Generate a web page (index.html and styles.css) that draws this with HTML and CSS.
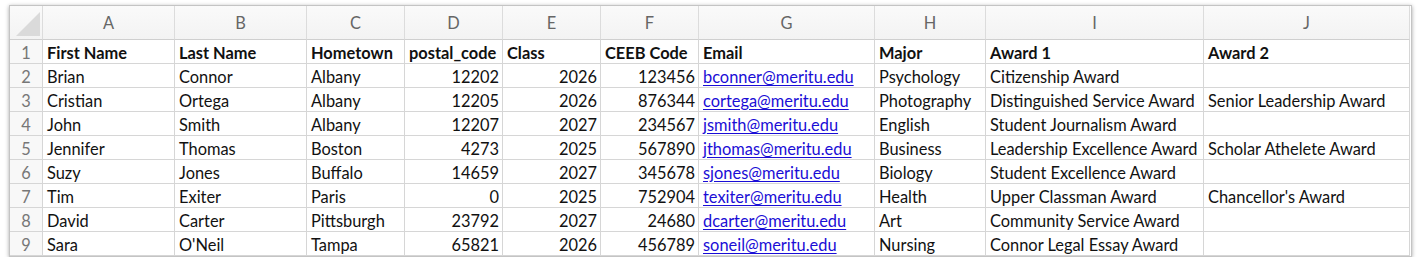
FILE: index.html
```html
<!DOCTYPE html>
<html>
<head>
<meta charset="utf-8">
<link rel="stylesheet" href="styles.css">
</head>
<body>
<div class="sheet">
  <div class="grid">
    <div class="hd corner"><span class="tri"></span></div>
    <div class="hd">A</div><div class="hd">B</div><div class="hd">C</div><div class="hd">D</div><div class="hd">E</div><div class="hd">F</div><div class="hd">G</div><div class="hd">H</div><div class="hd">I</div><div class="hd">J</div>

    <div class="rn">1</div>
    <div class="c b">First Name</div><div class="c b">Last Name</div><div class="c b">Hometown</div><div class="c b">postal_code</div><div class="c b">Class</div><div class="c b">CEEB Code</div><div class="c b">Email</div><div class="c b">Major</div><div class="c b">Award 1</div><div class="c b">Award 2</div>

    <div class="rn">2</div>
    <div class="c">Brian</div><div class="c">Connor</div><div class="c">Albany</div><div class="c n">12202</div><div class="c n">2026</div><div class="c n">123456</div><div class="c"><a href="#">bconner@meritu.edu</a></div><div class="c">Psychology</div><div class="c">Citizenship Award</div><div class="c"></div>

    <div class="rn">3</div>
    <div class="c">Cristian</div><div class="c">Ortega</div><div class="c">Albany</div><div class="c n">12205</div><div class="c n">2026</div><div class="c n">876344</div><div class="c"><a href="#">cortega@meritu.edu</a></div><div class="c">Photography</div><div class="c">Distinguished Service Award</div><div class="c">Senior Leadership Award</div>

    <div class="rn">4</div>
    <div class="c">John</div><div class="c">Smith</div><div class="c">Albany</div><div class="c n">12207</div><div class="c n">2027</div><div class="c n">234567</div><div class="c"><a href="#">jsmith@meritu.edu</a></div><div class="c">English</div><div class="c">Student Journalism Award</div><div class="c"></div>

    <div class="rn">5</div>
    <div class="c">Jennifer</div><div class="c">Thomas</div><div class="c">Boston</div><div class="c n">4273</div><div class="c n">2025</div><div class="c n">567890</div><div class="c"><a href="#">jthomas@meritu.edu</a></div><div class="c">Business</div><div class="c">Leadership Excellence Award</div><div class="c">Scholar Athelete Award</div>

    <div class="rn">6</div>
    <div class="c">Suzy</div><div class="c">Jones</div><div class="c">Buffalo</div><div class="c n">14659</div><div class="c n">2027</div><div class="c n">345678</div><div class="c"><a href="#">sjones@meritu.edu</a></div><div class="c">Biology</div><div class="c">Student Excellence Award</div><div class="c"></div>

    <div class="rn">7</div>
    <div class="c">Tim</div><div class="c">Exiter</div><div class="c">Paris</div><div class="c n">0</div><div class="c n">2025</div><div class="c n">752904</div><div class="c"><a href="#">texiter@meritu.edu</a></div><div class="c">Health</div><div class="c">Upper Classman Award</div><div class="c">Chancellor's Award</div>

    <div class="rn">8</div>
    <div class="c">David</div><div class="c">Carter</div><div class="c">Pittsburgh</div><div class="c n">23792</div><div class="c n">2027</div><div class="c n">24680</div><div class="c"><a href="#">dcarter@meritu.edu</a></div><div class="c">Art</div><div class="c">Community Service Award</div><div class="c"></div>

    <div class="rn">9</div>
    <div class="c">Sara</div><div class="c">O'Neil</div><div class="c">Tampa</div><div class="c n">65821</div><div class="c n">2026</div><div class="c n">456789</div><div class="c"><a href="#">soneil@meritu.edu</a></div><div class="c">Nursing</div><div class="c">Connor Legal Essay Award</div><div class="c"></div>

    <div class="rn"></div>
    <div class="c"></div><div class="c"></div><div class="c"></div><div class="c"></div><div class="c"></div><div class="c"></div><div class="c"></div><div class="c"></div><div class="c"></div><div class="c"></div>
  </div>
</div>
</body>
</html>
```

FILE: styles.css
```css
html, body {
  margin: 0;
  padding: 0;
  background: #ffffff;
}

body {
  padding: 5px 0 0 9px;
  font-family: Lato, "Open Sans", sans-serif;
}

.sheet {
  width: 1401px;
  height: 250px;
  border: 1px solid #c4c4c4;
  box-shadow: 0 1px 4px rgba(0, 0, 0, 0.35);
  overflow: hidden;
  background: #fff;
}

.grid {
  display: grid;
  grid-template-columns: 33px 132px 132px 98px 98px 98px 98px 176px 111px 218px 206px;
  grid-template-rows: 34px repeat(10, 24px);
}

.grid > div {
  box-sizing: border-box;
  border-right: 1px solid #d6d6d6;
  border-bottom: 1px solid #d6d6d6;
  white-space: nowrap;
  overflow: visible;
  font-size: 16.4px;
  line-height: 23px;
  padding-top: 1px;
}

.hd {
  background: linear-gradient(#fafafa, #f3f3f3);
  color: #666;
  text-align: center;
  line-height: 33px !important;
  padding-top: 0 !important;
  border-right-color: #dcdcdc !important;
  border-bottom-color: #cfcfcf !important;
}

.corner {
  position: relative;
}

.tri {
  position: absolute;
  left: 6px;
  top: 6px;
  width: 24px;
  height: 24px;
  background: #dadada;
  clip-path: polygon(100% 0, 100% 100%, 0 100%);
}

.rn {
  background: #f8f8f8;
  color: #777;
  text-align: center;
}

.c {
  color: #111;
  padding-left: 4px;
  padding-right: 3px;
}

.b {
  font-weight: 700;
}

.n {
  text-align: right;
}

.c a {
  color: #1a0dd6;
  text-decoration: underline;
  text-underline-offset: 2px;
}
```
